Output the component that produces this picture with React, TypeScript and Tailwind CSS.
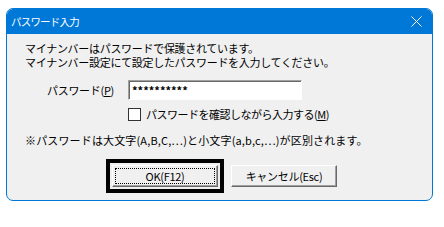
import React from "react";

const font = { fontFamily: '"Noto Sans CJK JP", "Noto Sans", sans-serif' };

function RaisedButton({ children, focused }: { children: React.ReactNode; focused?: boolean }) {
  return (
    <div className="w-[106px] h-[22px] bg-[#f0f0f0] border border-t-white border-l-white border-r-[#696969] border-b-[#696969] shadow-[inset_-1px_-1px_0_#a0a0a0] flex items-center justify-center p-[2px]">
      <div
        className={`w-full h-full flex items-center justify-center text-[11px] leading-none text-black ${
          focused ? "border border-dotted border-black" : ""
        }`}
      >
        {children}
      </div>
    </div>
  );
}

export default function App() {
  return (
    <div className="w-[444px] h-[227px] bg-white pt-[8px] pl-[6px]" style={font}>
      <div className="w-[427px] h-[193px] border border-[#0078d7] rounded-[7px] overflow-hidden flex flex-col bg-[#f0f0f0]">
        {/* title bar */}
        <div className="h-[25px] bg-[#0078d7] flex items-center justify-between pl-[4px] pr-[10px]">
          <span className="text-white text-[10.5px] tracking-[-0.8px]">パスワード入力</span>
          <svg width="11" height="11" viewBox="0 0 11 11">
            <path d="M0.5 0.5L10.5 10.5M10.5 0.5L0.5 10.5" stroke="white" strokeWidth="1" />
          </svg>
        </div>

        {/* body */}
        <div className="flex-1 flex flex-col pl-[18px] text-[11px] text-black tracking-[-0.3px]">
          <div className="mt-[7px] leading-[14px]">
            <p>マイナンバーはパスワードで保護されています。</p>
            <p>マイナンバー設定にて設定したパスワードを入力してください。</p>
          </div>

          <div className="mt-[11px] flex items-center">
            <span className="ml-[22px] w-[81px] leading-[14px]">
              パスワード(<span className="underline">P</span>)
            </span>
            <div className="w-[174px] h-[20px] bg-white border border-t-[#a0a0a0] border-l-[#a0a0a0] border-r-white border-b-white shadow-[inset_1px_1px_0_#696969] flex items-center pl-[3px] text-[11px] font-bold tracking-[0px] leading-none">
              **********
            </div>
          </div>

          <div className="mt-[7px] flex items-center ml-[103px]">
            <div className="w-[13px] h-[13px] bg-white border border-[#333333]" />
            <span className="ml-[5px] leading-[14px] tracking-[-0.5px]">
              パスワードを確認しながら入力する(<span className="underline">M</span>)
            </span>
          </div>

          <p className="mt-[12px] leading-[14px] tracking-[0.15px]">
            ※パスワードは大文字(A,B,C,…)と小文字(a,b,c,…)が区別されます。
          </p>

          <div className="mt-[12px] flex items-center ml-[81px]">
            <div className="border-[4px] border-black p-[2px]">
              <RaisedButton focused>OK(F12)</RaisedButton>
            </div>
            <div className="ml-[7px]">
              <RaisedButton>キャンセル(Esc)</RaisedButton>
            </div>
          </div>
        </div>
      </div>
    </div>
  );
}
